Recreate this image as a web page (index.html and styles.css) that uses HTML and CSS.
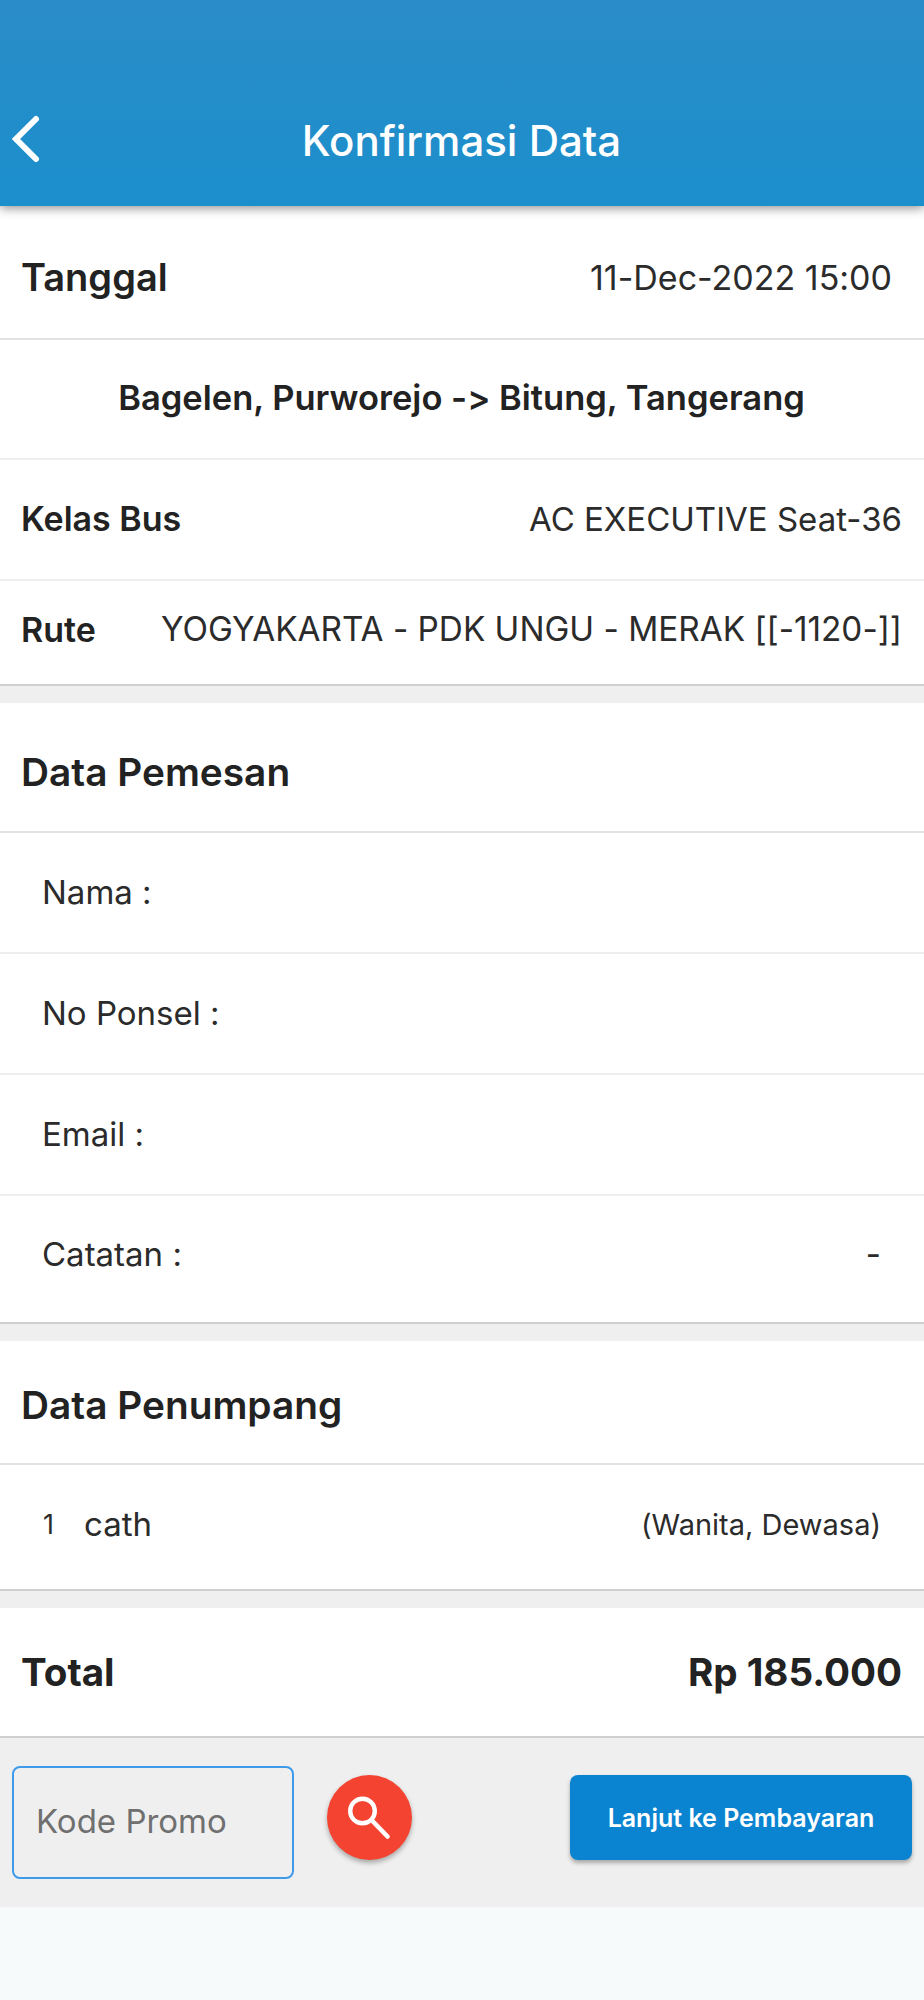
FILE: index.html
```html
<!doctype html>
<html lang="id">
<head>
    <meta charset="UTF-8">
    <title>Konfirmasi Data</title>
    <link rel="stylesheet" href="styles.css">
</head>
<body>
<div class="wrapper">
    <header class="header">
        <svg class="back-icon" width="34" height="50" viewBox="0 0 34 50" fill="none" stroke="#fff" stroke-width="6" stroke-linecap="round">
            <path d="M27 5 L7 25 L27 45"/>
        </svg>
        <div class="header-title">Konfirmasi Data</div>
    </header>

    <section class="card">
        <div class="row row-date">
            <span class="label-big">Tanggal</span>
            <span class="value value-date">11-Dec-2022 15:00</span>
        </div>
        <div class="row row-route">
            <span class="route-title">Bagelen, Purworejo -&gt; Bitung, Tangerang</span>
        </div>
        <div class="row row-class">
            <span class="label">Kelas Bus</span>
            <span class="value">AC EXECUTIVE Seat-36</span>
        </div>
        <div class="row row-line">
            <span class="label">Rute</span>
            <span class="value value-line">YOGYAKARTA - PDK UNGU - MERAK [[-1120-]]</span>
        </div>
    </section>

    <section class="card">
        <div class="row row-heading">
            <span class="heading">Data Pemesan</span>
        </div>
        <div class="row row-field"><span class="field">Nama :</span></div>
        <div class="row row-field"><span class="field">No Ponsel :</span></div>
        <div class="row row-field"><span class="field">Email :</span></div>
        <div class="row row-field row-notes">
            <span class="field">Catatan :</span>
            <span class="field">-</span>
        </div>
    </section>

    <section class="card">
        <div class="row row-heading row-heading-small">
            <span class="heading">Data Penumpang</span>
        </div>
        <div class="row row-field row-passenger">
            <span class="passenger">
                <span class="passenger-no">1</span>
                <span class="field">cath</span>
            </span>
            <span class="passenger-info">(Wanita, Dewasa)</span>
        </div>
    </section>

    <section class="card">
        <div class="row row-total">
            <span class="total">Total</span>
            <span class="total">Rp 185.000</span>
        </div>
    </section>

    <div class="footer">
        <input class="promo-input" type="text" placeholder="Kode Promo">
        <button class="search-button" aria-label="Cari">
            <svg width="44" height="44" viewBox="0 0 44 44" fill="none" stroke="#fff" stroke-width="4.4" stroke-linecap="round">
                <circle cx="14.5" cy="15" r="12.3"/>
                <path d="M24 24.5 L39.5 40.5" stroke-width="4.6"/>
            </svg>
        </button>
        <button class="pay-button">Lanjut ke Pembayaran</button>
    </div>
</div>
</body>
</html>
```

FILE: styles.css
```css
* {
    box-sizing: border-box;
}

html,
body {
    margin: 0;
    padding: 0;
}

body {
    background: #f7fafb;
    font-family: Inter, "Liberation Sans", sans-serif;
    font-variant-ligatures: none;
    font-feature-settings: "calt" 0;
    color: #222;
}

.wrapper {
    display: flex;
    flex-direction: column;
    width: 924px;
    background: #efefef;
}

.header {
    display: flex;
    align-items: center;
    justify-content: center;
    height: 206px;
    padding-top: 74px;
    background: linear-gradient(#2a8cc8, #1b8fcc);
    box-shadow: 0 2px 10px rgba(0, 0, 0, 0.45);
    position: relative;
    z-index: 1;
}

.back-icon {
    position: absolute;
    left: 9px;
    top: 114px;
}

.header-title {
    color: #fff;
    font-size: 42px;
    font-weight: 500;
    margin-right: 1px;
}

.card {
    display: flex;
    flex-direction: column;
    background: #fff;
    margin-bottom: 17px;
    border-bottom: 2px solid #cfcfcf;
}

.row {
    display: flex;
    align-items: center;
    justify-content: space-between;
    padding: 0 22px 0 21px;
    border-bottom: 2px solid #eee;
}

.row:last-child {
    border-bottom: none;
}

.row-date {
    height: 134px;
    padding-top: 10px;
    padding-right: 32px;
    border-bottom-color: #e2e2e2;
}

.row-route {
    height: 120px;
    padding-bottom: 4px;
    justify-content: center;
}

.row-class {
    height: 121px;
    padding-bottom: 2px;
}

.row-line {
    height: 103px;
    padding-bottom: 7px;
}

.row-heading {
    height: 130px;
    padding-top: 8px;
    border-bottom-color: #e2e2e2;
}

.row-heading-small {
    height: 124px;
    padding-top: 5px;
}

.row-field {
    height: 121px;
    padding: 0 43px 2px 42px;
}

.row-notes {
    height: 126px;
    padding-bottom: 10px;
}

.row-passenger {
    height: 124px;
    padding-bottom: 6px;
    padding-left: 43px;
}

.row-total {
    height: 128px;
}

.label-big {
    font-size: 38px;
    font-weight: 600;
}

.label {
    font-size: 34px;
    font-weight: 600;
}

.value {
    font-size: 33px;
    font-weight: 400;
    color: #2b2b2b;
}

.value-date {
    font-size: 34px;
}

.value-line {
    font-size: 33.3px;
}

.route-title {
    font-size: 34.5px;
    font-weight: 600;
}

.heading {
    font-size: 38.8px;
    font-weight: 600;
}

.field {
    font-size: 33px;
    color: #2b2b2b;
}

.passenger {
    display: flex;
    align-items: center;
    gap: 30px;
}

.passenger-no {
    font-size: 27px;
    color: #2b2b2b;
}

.passenger-info {
    font-size: 29px;
    color: #2b2b2b;
}

.total {
    font-size: 38.6px;
    font-weight: 700;
}

.footer {
    display: flex;
    align-items: center;
    height: 169px;
    padding: 0 12px;
    margin-top: -17px;
    background: #efefef;
}

.promo-input {
    width: 282px;
    height: 113px;
    padding: 0 22px 4px;
    background: transparent;
    border: 2px solid #3f9bea;
    border-radius: 8px;
    outline: none;
    font-family: inherit;
    font-size: 33px;
}

.promo-input::placeholder {
    color: #707070;
}

.search-button {
    display: flex;
    align-items: center;
    justify-content: center;
    width: 85px;
    height: 85px;
    margin-left: 33px;
    margin-bottom: 10px;
    padding: 0;
    background: #f44330;
    border: none;
    border-radius: 50%;
    box-shadow: 0 3px 5px rgba(0, 0, 0, 0.3);
}

.pay-button {
    width: 342px;
    height: 85px;
    margin-left: auto;
    margin-bottom: 10px;
    background: #0a84d0;
    border: none;
    border-radius: 8px;
    box-shadow: 0 3px 4px rgba(0, 0, 0, 0.3);
    color: #fff;
    font-family: inherit;
    font-size: 25px;
    font-weight: 600;
}
```
